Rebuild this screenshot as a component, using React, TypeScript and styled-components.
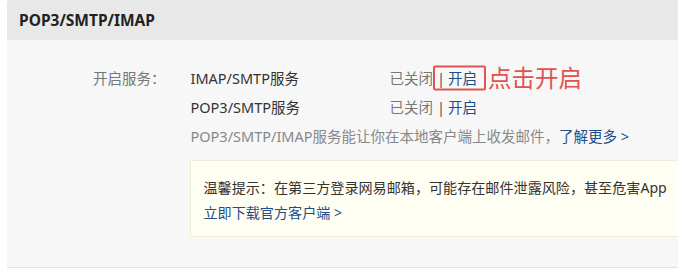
import { createGlobalStyle, styled } from 'styled-components'

const Global = createGlobalStyle`
  html, body {
    margin: 0;
    background: #fff;
    overflow: hidden;
  }
  body {
    font-family: 'Noto Sans', 'Noto Sans CJK SC', sans-serif;
    font-size: 14.5px;
    color: #333;
  }
`

const services = ['IMAP/SMTP服务', 'POP3/SMTP服务']

export default function App() {
  return (
    <>
      <Global />
      <Panel>
        <Header>POP3/SMTP/IMAP</Header>
        <Body>
          <Label>开启服务：</Label>
          <Content>
            {services.map((name, i) => (
              <Row key={name}>
                <Name>{name}</Name>
                <Status>
                  已关闭
                  <Toggle>
                    <Sep>|</Sep>
                    <Link>开启</Link>
                    {i === 0 && (
                      <>
                        <Mark />
                        <Note>点击开启</Note>
                      </>
                    )}
                  </Toggle>
                </Status>
              </Row>
            ))}
            <Row>
              <Desc>POP3/SMTP/IMAP服务能让你在本地客户端上收发邮件，</Desc>
              <Link>了解更多 &gt;</Link>
            </Row>
            <Tip>
              <TipLine>温馨提示：在第三方登录网易邮箱，可能存在邮件泄露风险，甚至危害App</TipLine>
              <TipLine>
                <Link>立即下载官方客户端 &gt;</Link>
              </TipLine>
            </Tip>
          </Content>
        </Body>
      </Panel>
    </>
  )
}

const Panel = styled.div`
  margin-left: 7px;
  width: 720px;
`

const Header = styled.div`
  height: 40px;
  display: flex;
  align-items: center;
  padding-left: 12px;
  background: #e8e8e8;
  border-top-left-radius: 3px;
  font-size: 15.5px;
  font-weight: bold;
  color: #222;
`

const Body = styled.div`
  height: 228px;
  box-sizing: border-box;
  padding: 23px 0 0 86px;
  background: #f7f7f7;
  border-bottom: 1px solid #e2e2e2;
  display: flex;
  gap: 25px;
`

const Label = styled.div`
  height: 30px;
  line-height: 30px;
  color: #777;
`

const Content = styled.div`
  display: flex;
  flex-direction: column;
`

const Row = styled.div`
  height: 29px;
  display: flex;
  align-items: center;
`

const Name = styled.span`
  width: 199px;
  color: #333;
`

const Status = styled.span`
  display: flex;
  align-items: center;
  color: #777;
`

const Toggle = styled.span`
  position: relative;
  display: flex;
  align-items: center;
  gap: 3px;
  margin-left: 4px;
`

const Sep = styled.span`
  color: #555;
`

const Link = styled.a`
  color: #1d4e89;
  cursor: pointer;
`

const Mark = styled.span`
  position: absolute;
  left: -4px;
  top: 50%;
  transform: translateY(-50%);
  width: 53px;
  height: 25px;
  box-sizing: border-box;
  border: 2px solid #e05555;
  border-radius: 2px;
`

const Note = styled.span`
  position: absolute;
  left: 51px;
  top: 50%;
  transform: translateY(-52%);
  white-space: nowrap;
  font-size: 23.5px;
  color: #e0524f;
`

const Desc = styled.span`
  color: #888;
`

const Tip = styled.div`
  margin: 10px 0 0 -1px;
  height: 77px;
  width: 520px;
  box-sizing: border-box;
  padding: 14px 0 0 13px;
  background: #fffef3;
  border: 1px solid #efecd8;
  display: flex;
  flex-direction: column;
  white-space: nowrap;
  font-size: 14.1px;
`

const TipLine = styled.div`
  height: 25px;
  line-height: 25px;
`
